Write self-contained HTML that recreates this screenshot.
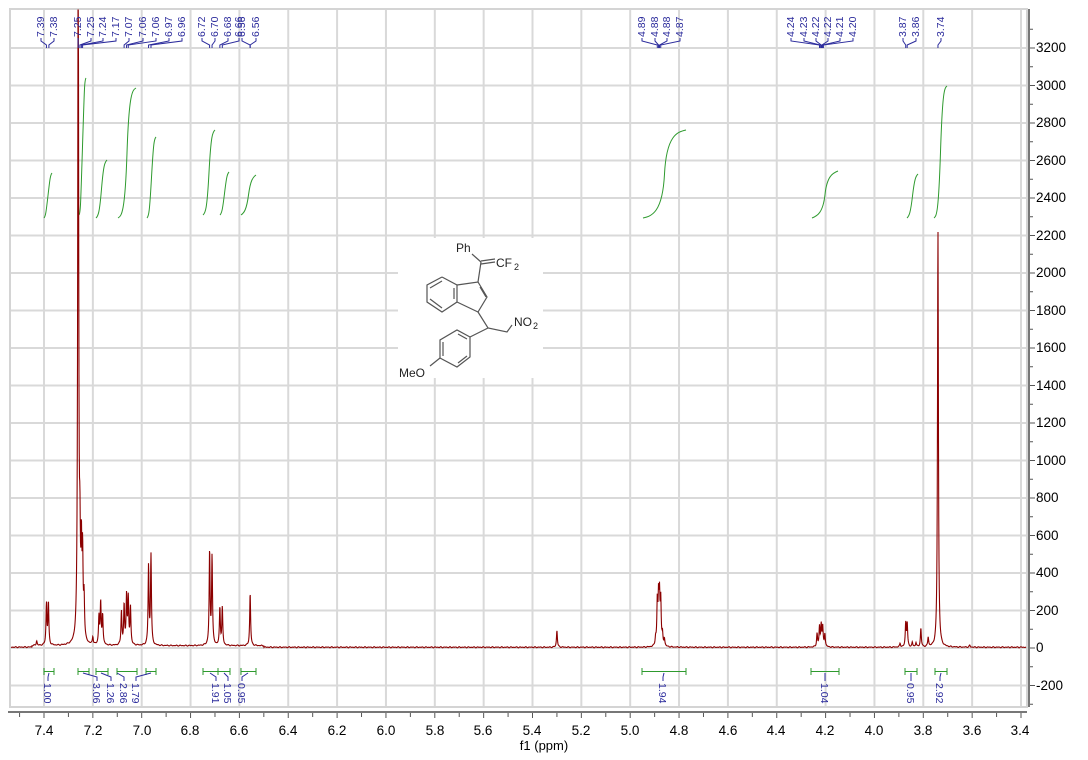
<!DOCTYPE html>
<html><head><meta charset="utf-8"><style>
html,body{margin:0;padding:0;background:#fff;}
svg{display:block;font-family:"Liberation Sans",sans-serif;}
.pl{font-size:10.5px;fill:#2b2b9c;}
.il{font-size:10.5px;fill:#2b2b9c;}
.ax{font-size:13.5px;fill:#000;}
</style></head><body>
<svg id="s" width="1088" height="760" viewBox="0 0 1088 760" xmlns="http://www.w3.org/2000/svg">
<rect width="1088" height="760" fill="#fff"/>
<g id="grid" stroke="#d9d9d9" stroke-width="2"></g>
<rect x="10" y="9" width="1017" height="698" fill="none" stroke="#d4d4d4" stroke-width="2"/>
<rect x="398" y="238" width="145" height="140" fill="#fff" stroke="none"/>
<g stroke="#555" stroke-width="1.2" fill="none">
<polyline points="442,277 427,285 427,302 442,312 457,302 457,285 442,277"/>
<line x1="430" y1="288" x2="442" y2="281"/><line x1="430" y1="299" x2="442" y2="308"/><line x1="454" y1="288" x2="454" y2="299"/>
<polyline points="457,285 478,282 487,297 478,312 457,302"/>
<line x1="480" y1="287" x2="486" y2="297"/>
<line x1="478" y1="282" x2="481" y2="262"/>
<line x1="481" y1="262" x2="472" y2="254"/>
<line x1="481" y1="261" x2="495" y2="259"/><line x1="481" y1="264" x2="495" y2="262"/>
<polyline points="478,312 488,328 507,332 512,325"/>
<line x1="488" y1="328" x2="470" y2="337"/>
<polyline points="470,337 457,330 440,340 440,358 457,367 470,357 470,337"/>
<line x1="443" y1="342" x2="443" y2="356"/><line x1="458" y1="334" x2="467" y2="339"/><line x1="458" y1="363" x2="467" y2="356"/>
<line x1="440" y1="358" x2="430" y2="366"/>
</g>
<g font-size="12" fill="#222">
<text x="456" y="252">Ph</text>
<text x="496" y="267">CF</text><text x="514" y="270" font-size="9">2</text>
<text x="514" y="326">NO</text><text x="533" y="329" font-size="9">2</text>
<text x="399" y="377">MeO</text>
</g>
<g id="integ" stroke="#2e9a2e" stroke-width="1" fill="none"></g>
<path id="spec" fill="none" stroke="#8b0000" stroke-width="1.1"/>
<g id="ticks" stroke="#555" stroke-width="1"></g>
<line x1="8" y1="712" x2="1027" y2="712" stroke="#777" stroke-width="2"/>
<line x1="1029" y1="9" x2="1029" y2="707" stroke="#777" stroke-width="2"/>
<g class="ax" text-anchor="middle">
<text x="44" y="735">7.4</text><text x="93" y="735">7.2</text><text x="142" y="735">7.0</text><text x="190" y="735">6.8</text><text x="239" y="735">6.6</text><text x="288" y="735">6.4</text><text x="337" y="735">6.2</text><text x="386" y="735">6.0</text><text x="435" y="735">5.8</text><text x="483" y="735">5.6</text><text x="532" y="735">5.4</text><text x="581" y="735">5.2</text><text x="630" y="735">5.0</text><text x="679" y="735">4.8</text><text x="728" y="735">4.6</text><text x="776" y="735">4.4</text><text x="825" y="735">4.2</text><text x="874" y="735">4.0</text><text x="923" y="735">3.8</text><text x="972" y="735">3.6</text><text x="1020" y="735">3.4</text>
<text x="544" y="750" font-size="13">f1 (ppm)</text>
</g>
<g class="ax">
<text x="1036" y="52">3200</text><text x="1036" y="90">3000</text><text x="1036" y="127">2800</text><text x="1036" y="165">2600</text><text x="1036" y="202">2400</text><text x="1036" y="240">2200</text><text x="1036" y="277">2000</text><text x="1036" y="315">1800</text><text x="1036" y="352">1600</text><text x="1036" y="390">1400</text><text x="1036" y="427">1200</text><text x="1036" y="465">1000</text><text x="1036" y="502">800</text><text x="1036" y="540">600</text><text x="1036" y="577">400</text><text x="1036" y="615">200</text><text x="1036" y="652">0</text><text x="1036" y="690">-200</text>
</g>
<g class="pl">
<text transform="translate(44,37) rotate(-90)">7.39</text>
<text transform="translate(57,37) rotate(-90)">7.38</text>
<text transform="translate(81,37) rotate(-90)">7.25</text>
<text transform="translate(94,37) rotate(-90)">7.25</text>
<text transform="translate(106,37) rotate(-90)">7.24</text>
<text transform="translate(119,37) rotate(-90)">7.17</text>
<text transform="translate(132,37) rotate(-90)">7.07</text>
<text transform="translate(146,37) rotate(-90)">7.06</text>
<text transform="translate(159,37) rotate(-90)">7.06</text>
<text transform="translate(172,37) rotate(-90)">6.97</text>
<text transform="translate(185,37) rotate(-90)">6.96</text>
<text transform="translate(205,37) rotate(-90)">6.72</text>
<text transform="translate(218,37) rotate(-90)">6.70</text>
<text transform="translate(231,37) rotate(-90)">6.68</text>
<text transform="translate(242,37) rotate(-90)">6.66</text>
<text transform="translate(245,37) rotate(-90)">6.56</text>
<text transform="translate(259,37) rotate(-90)">6.56</text>
<text transform="translate(645,37) rotate(-90)">4.89</text>
<text transform="translate(658,37) rotate(-90)">4.88</text>
<text transform="translate(670,37) rotate(-90)">4.88</text>
<text transform="translate(683,37) rotate(-90)">4.87</text>
<text transform="translate(794,37) rotate(-90)">4.24</text>
<text transform="translate(807,37) rotate(-90)">4.23</text>
<text transform="translate(819,37) rotate(-90)">4.22</text>
<text transform="translate(831,37) rotate(-90)">4.22</text>
<text transform="translate(843,37) rotate(-90)">4.21</text>
<text transform="translate(856,37) rotate(-90)">4.20</text>
<text transform="translate(906,37) rotate(-90)">3.87</text>
<text transform="translate(919,37) rotate(-90)">3.86</text>
<text transform="translate(944,37) rotate(-90)">3.74</text>
</g>
<g class="il">
<text transform="translate(44,683) rotate(90)">1.00</text>
<text transform="translate(93,683) rotate(90)">3.06</text>
<text transform="translate(107,683) rotate(90)">1.26</text>
<text transform="translate(120,683) rotate(90)">2.86</text>
<text transform="translate(132,683) rotate(90)">1.79</text>
<text transform="translate(212,683) rotate(90)">1.91</text>
<text transform="translate(224,683) rotate(90)">1.05</text>
<text transform="translate(238,683) rotate(90)">0.95</text>
<text transform="translate(659,683) rotate(90)">1.94</text>
<text transform="translate(821,683) rotate(90)">1.04</text>
<text transform="translate(907,683) rotate(90)">0.95</text>
<text transform="translate(936,683) rotate(90)">2.92</text>
</g>
<g id="conn" stroke="#2b2b9c" stroke-width="1" fill="none"></g>
</svg>
<script>
var NS="http://www.w3.org/2000/svg";
function X(p){return 44+(7.4-p)*244.25;}
function Y(v){return 648-v*0.1875;}
function el(par,tag,a){var e=document.createElementNS(NS,tag);for(var k in a)e.setAttribute(k,a[k]);document.getElementById(par).appendChild(e);return e;}
for(var p=7.4;p>3.39;p-=0.2){var x=X(p);el("grid","line",{x1:x,y1:10,x2:x,y2:706});}
for(var v=-200;v<=3200;v+=200){var y=Y(v);el("grid","line",{x1:11,y1:y,x2:1026,y2:y});}
for(var i=0;i<=43;i++){var p=7.6-i*0.1;var x=X(p);if(x<10||x>1027)continue;el("ticks","line",{x1:x,y1:712,x2:x,y2:(i%2==0?718:717)});}
for(var v=-300;v<=3300;v+=100){var y=Y(v);if(y<10||y>706)continue;el("ticks","line",{x1:1029,y1:y,x2:(v%200==0?1035:1033),y2:y});}
var pk=[[7.390,220],[7.382,225],[7.43,25],[7.26,4000],[7.253,420],[7.247,450],[7.242,430],[7.236,220],[7.20,40],[7.175,150],[7.168,220],[7.16,160],[7.083,180],[7.072,210],[7.062,260],[7.055,240],[7.046,200],[6.972,420],[6.962,480],[6.722,500],[6.712,470],[6.680,200],[6.670,200],[6.556,280],[5.30,90],
[4.896,40],[4.889,230],[4.884,235],[4.880,240],[4.875,235],[4.868,60],[4.86,40],[4.235,70],[4.225,105],[4.218,115],[4.212,105],[4.203,70],[3.872,125],[3.866,125],[3.895,20],[3.845,25],[3.83,25],[3.81,100],[3.78,50],[3.74,2230],[3.61,10]];
var d="",w=0.0022;
for(var x=11;x<=1026;x+=0.25){var p=7.4-(x-44)/244.25;var s=4+3*Math.sin(x*1.7)*Math.cos(x*0.37);
if(p>6.5&&p<7.45)s+=8;
for(var j=0;j<pk.length;j++){var t=(p-pk[j][0])/w;s+=pk[j][1]/(1+t*t);}
var y=Math.max(10,Y(s));d+=(d?"L":"M")+x.toFixed(2)+","+y.toFixed(1);}
document.getElementById("spec").setAttribute("d",d);
var ig=[[44,218,52,173],[79,215,86,78],[96,218,107,160],[118,218,136,88],[147,218,156,137],[203,215,215,130],[220,215,229,172],[241,215,256,175],[643,218,686,130],[812,218,838,171],[907,218,918,174],[934,218,947,86]];
ig.forEach(function(a){var mx=(a[0]+a[2])/2;el("integ","path",{d:"M"+a[0]+","+a[1]+" C"+(a[0]+(a[2]-a[0])*0.2)+","+(a[1]-2)+" "+(mx-2)+","+(a[1]-5)+" "+mx+","+((a[1]+a[3])/2)+" S"+(a[2]-(a[2]-a[0])*0.2)+","+(a[3]+2)+" "+a[2]+","+a[3]});});
var br=[[44,54],[78,89],[96,108],[117,137],[146,156],[203,218],[218,230],[241,256],[642,686],[811,839],[905,917],[935,947]];
br.forEach(function(b){el("integ","path",{d:"M"+b[0]+",668V675M"+b[0]+",671.5H"+b[1]+"M"+b[1]+",668V675"});});
var pl=[[41,7.39],[54,7.38],[78,7.26],[91,7.253],[103,7.247],[116,7.242],[129,7.072],[143,7.062],[156,7.055],[169,6.972],[182,6.962],[202,6.722],[215,6.712],[228,6.680],[239,6.670],[242,6.556],[256,6.556],[642,4.889],[655,4.884],[667,4.880],[680,4.875],[791,4.225],[804,4.222],[816,4.218],[828,4.215],[840,4.212],[853,4.209],[903,3.872],[916,3.866],[941,3.74]];
pl.forEach(function(a){var x2=X(a[1]);el("conn","path",{d:"M"+a[0]+",38V41L"+x2+",45V48"});});
var il=[[48,49],[97,83],[111,101],[124,117],[136,151],[216,210],[228,224],[242,248],[663,664],[825,825],[911,911],[940,941]];
il.forEach(function(a){el("conn","path",{d:"M"+a[0]+",681V677L"+a[1]+",673"});});
</script>
</body></html>
